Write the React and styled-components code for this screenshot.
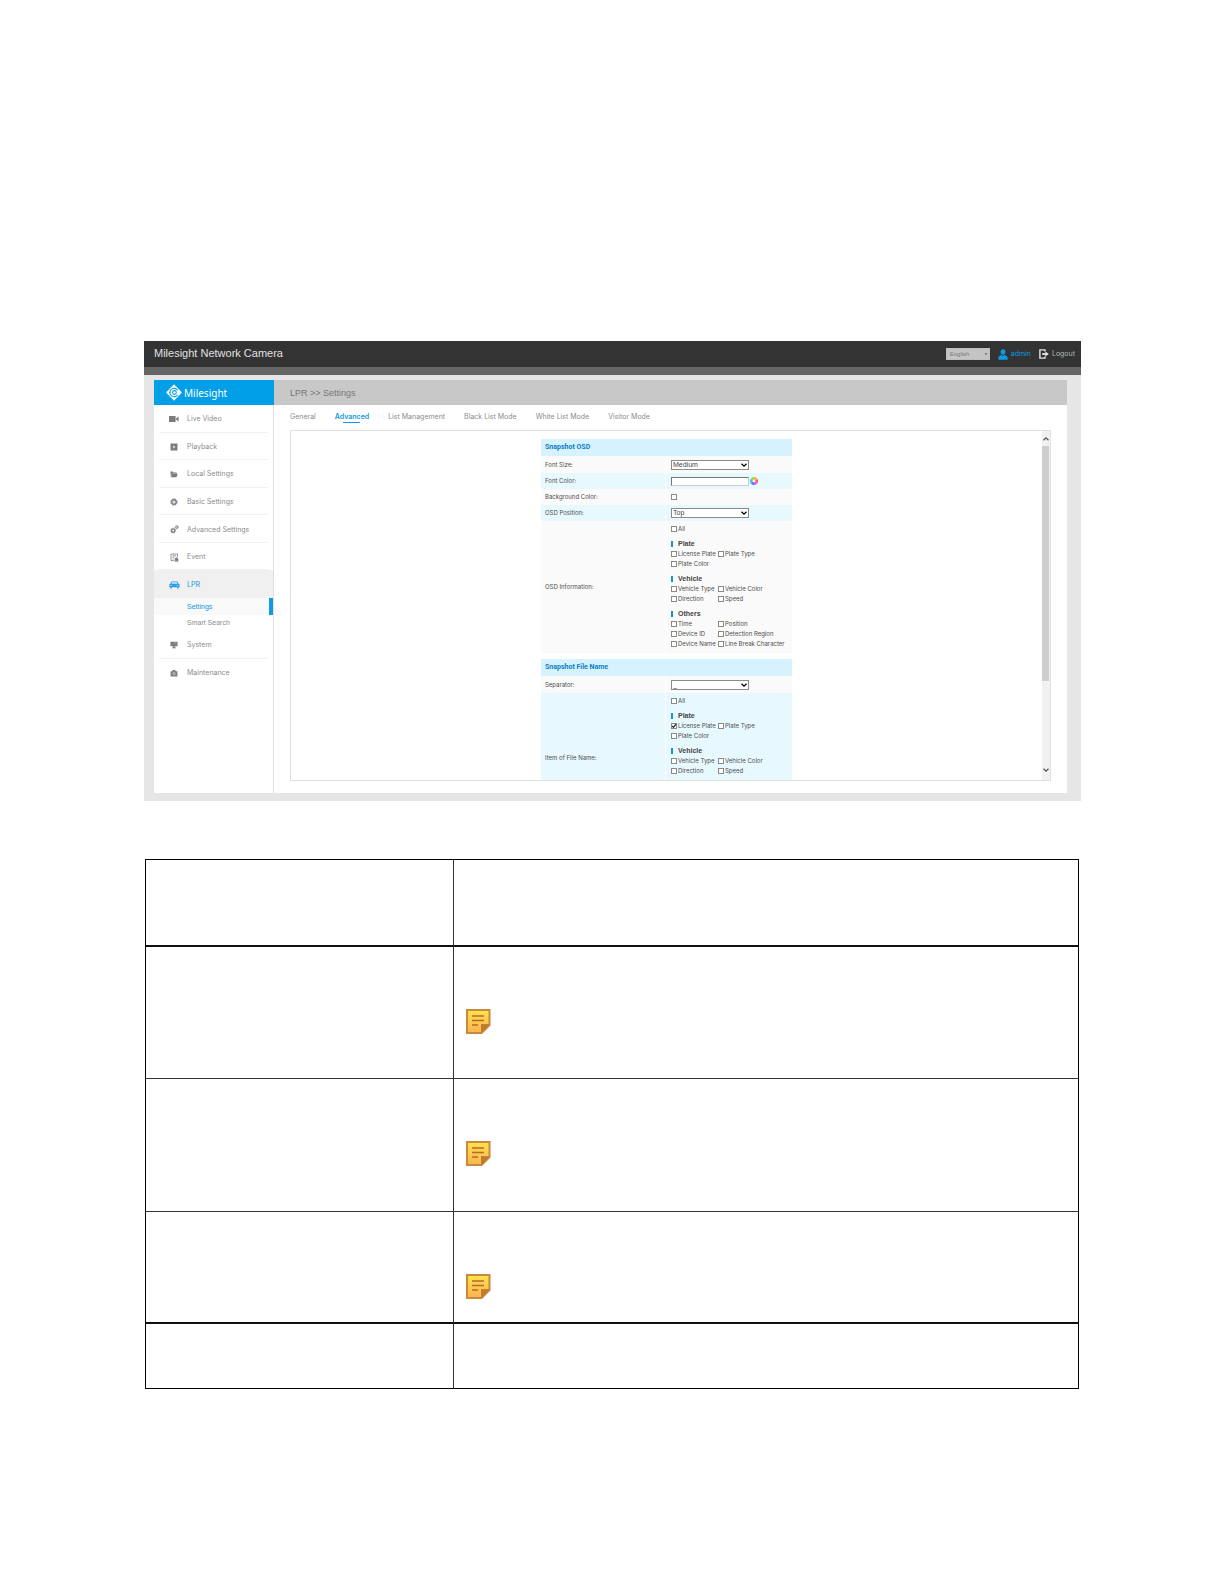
import React, { useState } from "react";
import styled, { createGlobalStyle, css } from "styled-components";

const Global = createGlobalStyle`
  * { box-sizing: border-box; }
  body { margin: 0; background: #fff; font-family: "Liberation Sans", Arial, sans-serif; }
  button, input, select { font: inherit; color: inherit; margin: 0; padding: 0; }
  a { color: inherit; text-decoration: none; }
  svg { display: block; flex: none; }
`;

const Page = styled.main`
  padding: 341px 143px 180px 144px;
`;

/* ---------- camera web console ---------- */
const Console = styled.section`
  background: #e6e6e6;
`;
const TopBar = styled.header`
  display: flex;
  align-items: center;
  justify-content: space-between;
  height: 34px;
  padding: 0 6px 0 10px;
  background: #333;
  border-bottom: 8px solid #666;
`;
const ProductName = styled.h1`
  align-self: flex-start;
  margin: 0;
  font-size: 11px;
  line-height: 24px;
  font-weight: 400;
  color: #e0e0e0;
`;
const Account = styled.div`
  display: flex;
  align-items: center;
  gap: 8px;
`;
const AccountLink = styled.a`
  display: flex;
  align-items: center;
  gap: 3px;
  font-family: Inter, sans-serif;
  font-size: 7px;
  line-height: 10px;
  color: ${(p) => (p.$accent ? "#0d9be3" : "#b5b5b5")};
`;
const Picker = styled.span`
  display: grid;
  align-items: center;
  width: ${(p) => p.$width};
  > * { grid-area: 1 / 1; }
  > svg { justify-self: end; margin-right: 2px; pointer-events: none; }
`;
const PickerSelect = styled.select`
  appearance: none;
  width: 100%;
  border-radius: 0;
  outline: none;
  ${(p) =>
    p.$language
      ? css`
          height: 12px;
          padding-left: 3px;
          border: 1px solid #bdbdbd;
          background: #c4c4c4;
          color: #777;
          font-size: 6px;
        `
      : css`
          height: 10px;
          padding-left: 1px;
          border: 1px solid #8a8a8a;
          background: #fff;
          color: #444;
          font-size: 7px;
          line-height: 8px;
        `}
`;

const Body = styled.div`
  display: flex;
  padding: 5px 14px 8px 10px;
`;
const Sidebar = styled.aside`
  width: 120px;
  flex: none;
  background: #fff;
  border-right: 1px solid #e0e0e0;
`;
const Brand = styled.div`
  display: flex;
  align-items: center;
  gap: 2px;
  height: 25px;
  margin-right: -1px;
  padding-left: 12px;
  background: #009fe8;
  color: #fff;
  font-family: "Noto Sans", sans-serif;
  font-size: 10px;
  line-height: 14px;
`;
const NavList = styled.ul`
  display: grid;
  grid-auto-rows: 1fr;
  height: ${(p) => p.$height};
  margin: 0;
  padding: 0;
  list-style: none;
`;
const NavItem = styled.li`
  display: flex;
  padding: 0 5px;
  background: ${(p) => (p.$active ? "#f0f0f0" : "transparent")};
`;
const NavLink = styled.a`
  flex: 1;
  display: flex;
  align-items: center;
  gap: 5px;
  padding: 2px 0 0 7px;
  border-bottom: 1px solid ${(p) => (p.$plain ? "transparent" : "#f1f1f1")};
  font-family: Inter, sans-serif;
  font-size: 7px;
  line-height: 10px;
  color: ${(p) => (p.$active ? "#0d9be3" : "#8c8c8c")};
`;
const NavIcon = styled.span`
  display: grid;
  place-items: center;
  width: 16px;
  color: ${(p) => (p.$active ? "#2a9df0" : "#7d7d7d")};
`;
const SubLink = styled.a`
  display: flex;
  align-items: center;
  height: ${(p) => (p.$active ? "17px" : "16px")};
  padding-left: 33px;
  font-size: 7px;
  line-height: 10px;
  color: ${(p) => (p.$active ? "#0d9be3" : "#8c8c8c")};
  background: ${(p) => (p.$active ? "#f9f9f9" : "#fff")};
  border-right: ${(p) => (p.$active ? "4px solid #0d9be3" : "0")};
`;

const Content = styled.div`
  flex: 1;
  min-width: 0;
  background: #fff;
`;
const Crumb = styled.div`
  display: flex;
  align-items: center;
  height: 25px;
  padding-left: 16px;
  background: #c8c8c8;
  color: #777;
  font-size: 9px;
  line-height: 12px;
`;
const Tabs = styled.nav`
  display: flex;
  gap: 19px;
  height: 25px;
  padding: 7px 16px 0;
`;
const Tab = styled.a`
  display: flex;
  flex-direction: column;
  align-items: center;
  height: 17px;
  font-family: Inter, sans-serif;
  font-size: 7px;
  line-height: 10px;
  font-weight: ${(p) => (p.$active ? 600 : 400)};
  color: ${(p) => (p.$active ? "#0d9be3" : "#8c8c8c")};
  &::after {
    content: "";
    width: 17px;
    border-bottom: 1px solid ${(p) => (p.$active ? "#0d9be3" : "transparent")};
  }
`;
const Panel = styled.div`
  display: flex;
  height: 351px;
  margin: 0 16px 12px;
  border: 1px solid #e0e0e0;
  overflow: hidden;
`;
const PanelBody = styled.form`
  flex: 1;
  display: flex;
  flex-direction: column;
  align-items: center;
  gap: 6px;
  padding-top: 8px;
`;
const ScrollTrack = styled.div`
  display: flex;
  flex-direction: column;
  width: 8px;
  background: #f1f1f1;
`;
const ScrollButton = styled.button`
  display: grid;
  place-items: center;
  width: 8px;
  height: ${(p) => (p.$down ? "20px" : "15px")};
  border: 0;
  background: none;
  color: #555;
`;
const ScrollThumb = styled.div`
  flex: 0 0 235px;
  margin: 0 1px 0 0;
  background: #cdcdcd;
`;
const ScrollSpace = styled.div`
  flex: 1;
`;

/* ---------- form ---------- */
const Group = styled.section`
  width: 251px;
  flex: none;
`;
const GroupTitle = styled.h2`
  margin: 0;
  padding-left: 4px;
  height: 17px;
  background: #d6f2ff;
  color: #0a7fc4;
  font-family: Roboto, sans-serif;
  font-size: 7px;
  line-height: 17px;
`;
const FieldRow = styled.div`
  display: grid;
  grid-template-columns: 124px 1fr;
  gap: 1px;
  min-height: ${(p) => p.$height || "16px"};
  > * { background: ${(p) => (p.$tint ? "#e8f8ff" : "#fafafa")}; }
`;
const labelText = css`
  font-family: Inter, sans-serif;
  font-size: 6px;
  line-height: 10px;
  color: #4d4d4d;
`;
const FieldLabel = styled.label`
  display: flex;
  align-items: center;
  padding-left: 4px;
  ${labelText}
`;
const FieldValue = styled.div`
  display: flex;
  align-items: center;
  gap: 1px;
  padding-left: 5px;
`;
const ColorInput = styled.input`
  width: 78px;
  height: 9px;
  border: 1px solid #777;
  border-right-color: #ccc;
  border-bottom-color: #ccc;
  background: #fff;
  font-size: 7px;
`;
const Swatch = styled.button`
  border: 0;
  background: none;
`;
const Items = styled.div`
  padding: 3px 0 4px 5px;
`;
const ItemHeading = styled.h3`
  margin: 4px 0 0;
  height: 11px;
  display: flex;
  align-items: center;
  gap: 5px;
  font-size: 7px;
  line-height: 10px;
  color: #444;
  &::before {
    content: "";
    width: 2px;
    height: 6px;
    background: #1592d2;
  }
`;
const ItemGrid = styled.div`
  display: grid;
  grid-template-columns: 47px 1fr;
  grid-auto-rows: 10px;
`;
const CheckLabel = styled.label`
  display: flex;
  align-items: center;
  gap: 1px;
  height: 10px;
  white-space: nowrap;
  ${labelText}
`;
const Box = styled.input`
  appearance: none;
  width: 6px;
  height: 6px;
  flex: none;
  border: 1px solid #8a8a8a;
  background: #fff;
`;
const BoxWrap = styled.span`
  display: grid;
  > * { grid-area: 1 / 1; }
  > svg { pointer-events: none; }
`;

/* ---------- description table ---------- */
const DescTable = styled.table`
  width: calc(100% - 3px);
  margin: 58px 2px 0 1px;
  border-spacing: 0;
  table-layout: fixed;
  border-top: 1px solid #000;
  border-left: 1px solid #000;
`;
const DescRow = styled.tr`
  height: ${(p) => p.$height};
  > * {
    padding: 62px 12px 0;
    vertical-align: top;
    border-bottom: ${(p) => (p.$heavy ? "2px solid #111" : `1px solid ${p.$last ? "#000" : "#333"}`)};
  }
  > th { border-right: 1px solid #333; }
  > td { border-right: 1px solid #000; }
`;
const NameCol = styled.col`
  width: 308px;
`;

const Chevron = ({ up }) => (
  <svg width="6" height="6" viewBox="0 0 6 6" fill="none" stroke="currentColor" strokeWidth="1.3">
    <path d={up ? "M.5 4.3 3 1.8l2.5 2.5" : "M.5 1.7 3 4.2l2.5-2.5"} />
  </svg>
);
const Caret = () => (
  <svg width="4" height="4" viewBox="0 0 4 4" fill="#808080">
    <path d="M.3 1h3.400L2 3.300z" />
  </svg>
);

const icons = {
  video: (
    <svg width="10" height="8" viewBox="0 0 10 8" fill="currentColor">
      <path d="M0 1h6.6v6H0zM7 3.6 9.6 1.6v4.8L7 4.6z" />
    </svg>
  ),
  play: (
    <svg width="8" height="8" viewBox="0 0 8 8">
      <path fill="currentColor" d="M.5.5h7v7h-7z" />
      <path fill="#ddd" d="M3 2.4 5.6 4 3 5.6z" />
    </svg>
  ),
  folder: (
    <svg width="8" height="7" viewBox="0 0 8 7" fill="currentColor">
      <path d="M.4.6h2.400l.7.900h3.300v1.200H2L.8 5.400zM2.100 2.900h5.700L6.400 6.300H.8z" />
    </svg>
  ),
  gear: (
    <svg width="8" height="8" viewBox="0 0 8 8" fill="none" stroke="currentColor">
      <circle cx="4" cy="4" r="2.2" strokeWidth="1.4" />
      <circle cx="4" cy="4" r="3.2" strokeWidth="1" strokeDasharray="1.5 1" />
      <circle cx="4" cy="4" r=".6" fill="currentColor" stroke="none" />
    </svg>
  ),
  gears: (
    <svg width="9" height="9" viewBox="0 0 9 9" fill="none" stroke="currentColor">
      <circle cx="3.2" cy="5.6" r="1.7" strokeWidth="1.4" />
      <circle cx="3.2" cy="5.6" r="2.6" strokeWidth=".6" strokeDasharray="1.2 .8" />
      <circle cx="6.8" cy="2.2" r="1.1" strokeWidth="1" />
      <circle cx="6.8" cy="2.2" r="1.8" strokeWidth=".5" strokeDasharray=".9 .6" />
    </svg>
  ),
  event: (
    <svg width="9" height="9" viewBox="0 0 9 9" fill="none" stroke="currentColor" strokeWidth=".8">
      <path d="M7.5 4V1H1v6.6h3M2.6 2.8h3.4M2.6 4.4h1.6M2.6 6h1" />
      <path d="M4.6 8.2h3.8M5.1 7.6V6.2a1.4 1.4 0 0 1 2.8 0v1.4z" fill="currentColor" />
    </svg>
  ),
  car: (
    <svg width="11" height="8" viewBox="0 0 11 8" fill="currentColor">
      <path d="M2.6.4h5.8l1.2 2.3 1 .6v3h-.9v1.1H8.2V6.3H2.8v1.1H1.3V6.3H.4v-3l1-.6z" />
      <path d="M3.2 1.2h4.6l.7 1.5h-6zM1.6 3.9h1.6v.9H1.6zM7.8 3.9h1.6v.9H7.8z" fill="#d5ebfb" />
    </svg>
  ),
  system: (
    <svg width="8" height="8" viewBox="0 0 8 8" fill="currentColor">
      <path d="M.4.8h7.2v4.4H.4zM3.2 5.2h1.6v1.2H6v.9H2v-.9h1.2z" />
      <path d="M4.4 1.7h2.2v.5H4.4z" fill="#ccc" />
    </svg>
  ),
  toolbox: (
    <svg width="8" height="8" viewBox="0 0 8 8">
      <path d="M.6 2.2h1.9V.9h3v1.3h1.9v5.2H.6z" fill="currentColor" />
      <circle cx="4" cy="4.7" r="1.2" fill="none" stroke="#ddd" strokeWidth=".7" />
    </svg>
  ),
};

const Logo = () => (
  <svg width="16" height="17" viewBox="0 0 16 17">
    <path d="M8 .6 15.8 8.5 8 16.4.2 8.5z" fill="#fff" stroke="#fff" strokeLinejoin="round" strokeWidth=".4" />
    <path d="M11.6 6.3A4.2 4.2 0 1 0 11.6 10.7" fill="none" stroke="#009fe8" strokeWidth="1.1" />
    <path d="M3 8.5h1.4" stroke="#009fe8" strokeWidth="1" />
    <circle cx="8.4" cy="8.5" r="1.9" fill="none" stroke="#009fe8" strokeWidth="1.1" />
  </svg>
);
const UserIcon = () => (
  <svg width="10" height="11" viewBox="0 0 10 11" fill="currentColor">
    <path d="M5 .2c1.6 0 2.5 1.2 2.4 2.7C7.3 4.500 6.300 5.800 5 5.800S2.700 4.500 2.600 2.900C2.500 1.400 3.400.2 5 .2zM3.400 5.900 5 7l1.600-1.100c2 .5 3.200 1.500 3.200 4.900H.2c0-3.400 1.200-4.400 3.200-4.900z" />
  </svg>
);
const ExitIcon = () => (
  <svg width="10" height="10" viewBox="0 0 10 10" fill="none" stroke="#e6e6e6">
    <path d="M6 2.400V.9H.9v8.200H6V7.600" strokeWidth="1.400" />
    <path d="M3.200 5H7" strokeWidth="1.800" />
    <path d="M6.400 2.400 9.800 5 6.400 7.600z" fill="#e6e6e6" stroke="none" />
  </svg>
);
const ColorWheel = () => (
  <svg width="8" height="8" viewBox="0 0 8 8">
    <path d="M4 4V0A4 4 0 0 1 7.500 2z" fill="#ffb02e" />
    <path d="M4 4 7.500 2a4 4 0 0 1 0 4z" fill="#ff5a5a" />
    <path d="M4 4l3.500 2A4 4 0 0 1 4 8z" fill="#e64be0" />
    <path d="M4 4v4A4 4 0 0 1 .5 6z" fill="#6a6af5" />
    <path d="M4 4 .5 6a4 4 0 0 1 0-4z" fill="#3cc8e8" />
    <path d="M4 4 .5 2A4 4 0 0 1 4 0z" fill="#8edb4a" />
    <circle cx="4" cy="4" r="1.500" fill="#fff" opacity=".8" />
  </svg>
);
const NoteIcon = () => (
  <svg width="25" height="25" viewBox="0 0 25 25" role="img" aria-label="Note">
    <defs>
      <linearGradient id="note" x1="0" y1="0" x2="0" y2="1">
        <stop offset="0" stopColor="#ffe14d" />
        <stop offset="1" stopColor="#fbb552" />
      </linearGradient>
    </defs>
    <path d="M0 0h24.500v16.500l-8.500 8.500H0z" fill="#c98a3c" />
    <path d="M2 2h20.500v13H15v8H2z" fill="url(#note)" />
    <path d="M15 15.500h8.500L15.500 24z" fill="#c07a2c" />
    <path d="M6 7h12M6 11.500h12M6 16h6" stroke="#b8692a" strokeWidth="1.600" />
  </svg>
);

function Check({ label, defaultChecked = false, id }) {
  const [on, setOn] = useState(defaultChecked);
  return (
    <CheckLabel>
      <BoxWrap>
        <Box type="checkbox" id={id} checked={on} onChange={() => setOn(!on)} />
        {on && (
          <svg width="6" height="6" viewBox="0 0 6 6" fill="none" stroke="#222" strokeWidth="1.200">
            <path d="M1.200 3 2.500 4.400 5 1.200" />
          </svg>
        )}
      </BoxWrap>
      {label}
    </CheckLabel>
  );
}

function Dropdown({ id, options }) {
  return (
    <Picker $width="78px">
      <PickerSelect id={id}>
        {options.map((o) => (
          <option key={o}>{o}</option>
        ))}
      </PickerSelect>
      <Chevron />
    </Picker>
  );
}

const plateItems = ["Plate", ["License Plate", "Plate Type", "Plate Color"]];
const vehicleItems = ["Vehicle", ["Vehicle Type", "Vehicle Color", "Direction", "Speed"]];
const otherItems = [
  "Others",
  ["Time", "Position", "Device ID", "Detection Region", "Device Name", "Line Break Character"],
];

function ItemPicker({ categories, checked = [] }) {
  return (
    <Items>
      <Check label="All" />
      {categories.map(([name, items]) => (
        <React.Fragment key={name}>
          <ItemHeading>{name}</ItemHeading>
          <ItemGrid>
            {items.map((i) => (
              <Check key={i} label={i} defaultChecked={checked.includes(i)} />
            ))}
          </ItemGrid>
        </React.Fragment>
      ))}
    </Items>
  );
}

function Nav({ items, height }) {
  return (
    <NavList $height={height}>
      {items.map(([name, icon, active, plain]) => (
        <NavItem key={name} $active={active}>
          <NavLink href="#" $active={active} $plain={active || plain}>
            <NavIcon $active={active}>{icons[icon]}</NavIcon>
            {name}
          </NavLink>
        </NavItem>
      ))}
    </NavList>
  );
}

const mainNav = [
  ["Live Video", "video"],
  ["Playback", "play"],
  ["Local Settings", "folder"],
  ["Basic Settings", "gear"],
  ["Advanced Settings", "gears"],
  ["Event", "event"],
  ["LPR", "car", true],
];
const lowerNav = [
  ["System", "system"],
  ["Maintenance", "toolbox", false, true],
];
const tabs = ["General", "Advanced", "List Management", "Black List Mode", "White List Mode", "Visitor Mode"];

const descRows = [
  { height: "87px", heavy: true },
  { height: "132px", note: true },
  { height: "133px", note: true },
  { height: "112px", heavy: true, note: true },
  { height: "65px", last: true },
];

export default function App() {
  return (
    <Page>
      <Global />
      <Console>
        <TopBar>
          <ProductName>Milesight Network Camera</ProductName>
          <Account>
            <Picker $width="44px">
              <PickerSelect $language aria-label="Language">
                <option>English</option>
              </PickerSelect>
              <Caret />
            </Picker>
            <AccountLink href="#" $accent>
              <UserIcon />
              admin
            </AccountLink>
            <AccountLink href="#">
              <ExitIcon />
              Logout
            </AccountLink>
          </Account>
        </TopBar>
        <Body>
          <Sidebar>
            <Brand>
              <Logo />
              Milesight
            </Brand>
            <Nav items={mainNav} height="193px" />
            <SubLink href="#" $active>Settings</SubLink>
            <SubLink href="#">Smart Search</SubLink>
            <Nav items={lowerNav} height="55px" />
          </Sidebar>
          <Content>
            <Crumb>LPR &gt;&gt; Settings</Crumb>
            <Tabs>
              {tabs.map((t) => (
                <Tab key={t} href="#" $active={t === "Advanced"}>{t}</Tab>
              ))}
            </Tabs>
            <Panel>
              <PanelBody>
                <Group>
                  <GroupTitle>Snapshot OSD</GroupTitle>
                  <FieldRow $height="17px">
                    <FieldLabel htmlFor="size">Font Size:</FieldLabel>
                    <FieldValue><Dropdown id="size" options={["Medium", "Small", "Large"]} /></FieldValue>
                  </FieldRow>
                  <FieldRow $tint>
                    <FieldLabel htmlFor="color">Font Color:</FieldLabel>
                    <FieldValue>
                      <ColorInput id="color" type="text" />
                      <Swatch type="button" aria-label="Pick color"><ColorWheel /></Swatch>
                    </FieldValue>
                  </FieldRow>
                  <FieldRow>
                    <FieldLabel htmlFor="background">Background Color:</FieldLabel>
                    <FieldValue><Check id="background" /></FieldValue>
                  </FieldRow>
                  <FieldRow $tint>
                    <FieldLabel htmlFor="position">OSD Position:</FieldLabel>
                    <FieldValue><Dropdown id="position" options={["Top", "Bottom"]} /></FieldValue>
                  </FieldRow>
                  <FieldRow>
                    <FieldLabel as="span">OSD Information:</FieldLabel>
                    <ItemPicker categories={[plateItems, vehicleItems, otherItems]} />
                  </FieldRow>
                </Group>
                <Group>
                  <GroupTitle>Snapshot File Name</GroupTitle>
                  <FieldRow $height="17px">
                    <FieldLabel htmlFor="separator">Separator:</FieldLabel>
                    <FieldValue><Dropdown id="separator" options={["_", "-"]} /></FieldValue>
                  </FieldRow>
                  <FieldRow $tint $height="130px">
                    <FieldLabel as="span">Item of File Name:</FieldLabel>
                    <ItemPicker categories={[plateItems, vehicleItems]} checked={["License Plate"]} />
                  </FieldRow>
                </Group>
              </PanelBody>
              <ScrollTrack>
                <ScrollButton type="button" aria-label="Scroll up"><Chevron up /></ScrollButton>
                <ScrollThumb />
                <ScrollSpace />
                <ScrollButton type="button" $down aria-label="Scroll down"><Chevron /></ScrollButton>
              </ScrollTrack>
            </Panel>
          </Content>
        </Body>
      </Console>

      <DescTable>
        <colgroup>
          <NameCol />
          <col />
        </colgroup>
        <tbody>
          {descRows.map((r, i) => (
            <DescRow key={i} $height={r.height} $heavy={r.heavy} $last={r.last}>
              <th scope="row" />
              <td>{r.note && <NoteIcon />}</td>
            </DescRow>
          ))}
        </tbody>
      </DescTable>
    </Page>
  );
}
